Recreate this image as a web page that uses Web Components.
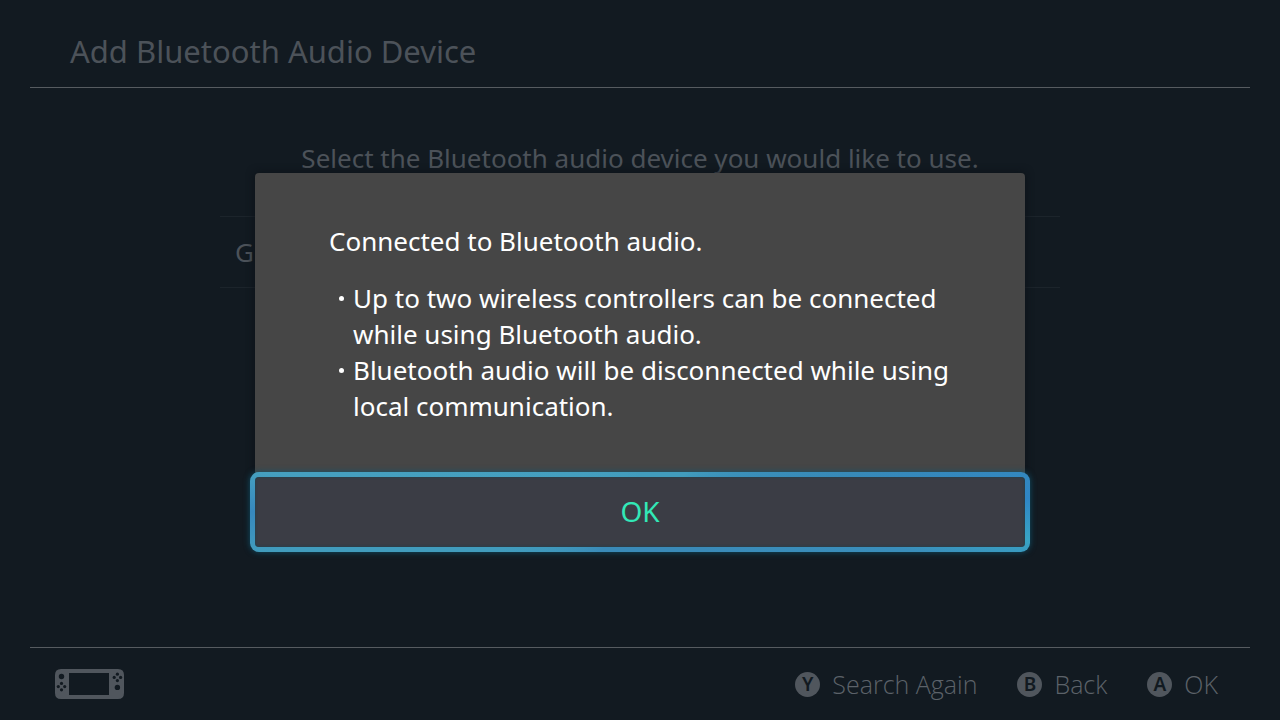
<!DOCTYPE html>
<html lang="en">
<head>
<meta charset="utf-8">
<title>Add Bluetooth Audio Device</title>
<style>
  body {
    margin: 0;
    background: #121a21;
    color: #4c5259;
    font-family: "Noto Sans", "Open Sans", sans-serif;
  }
</style>
</head>
<body>
<settings-screen>
  <screen-header slot="header">Add Bluetooth Audio Device</screen-header>
  <device-list>
    <span slot="prompt">Select the Bluetooth audio device you would like to use.</span>
    <device-row>G</device-row>
  </device-list>
  <screen-footer slot="footer">
    <button-hint key="Y">Search Again</button-hint>
    <button-hint key="B">Back</button-hint>
    <button-hint key="A">OK</button-hint>
  </screen-footer>
  <message-dialog slot="dialog" action="OK">
    <span slot="title">Connected to Bluetooth audio.</span>
    <dialog-note>Up to two wireless controllers can be connected while using Bluetooth audio.</dialog-note>
    <dialog-note>Bluetooth audio will be disconnected while using local communication.</dialog-note>
  </message-dialog>
</settings-screen>
<script>
const define = (name, html, setup) => {
  const template = document.createElement('template');
  template.innerHTML = html;
  customElements.define(name, class extends HTMLElement {
    constructor() {
      super();
      this.attachShadow({ mode: 'open' }).append(template.content.cloneNode(true));
    }
    connectedCallback() {
      if (setup) setup(this, this.shadowRoot);
    }
  });
};

define('settings-screen', `
  <style>
    :host { display: flex; flex-direction: column; min-height: 100vh; position: relative; }
    main { flex: 1; }
  </style>
  <slot name="header"></slot>
  <main><slot></slot></main>
  <slot name="footer"></slot>
  <slot name="dialog"></slot>
`);

define('screen-header', `
  <style>
    :host { display: block; margin: 0 30px; padding: 30px 40px 15px; border-bottom: 1px solid #565b60; }
    h1 { margin: 0; font-size: 31px; line-height: 42px; font-weight: inherit; }
  </style>
  <h1><slot></slot></h1>
`);

define('device-list', `
  <style>
    :host { display: block; max-width: 840px; margin: 0 auto; padding-top: 52px; }
    p { margin: 0 0 40px; font-size: 26px; line-height: 36px; text-align: center; }
    div { border-top: 1px solid #1c242b; }
  </style>
  <p><slot name="prompt"></slot></p>
  <div><slot></slot></div>
`);

define('device-row', `
  <style>
    :host { display: block; padding: 17px 15px; font-size: 26px; line-height: 36px; border-bottom: 1px solid #1c242b; }
  </style>
  <slot></slot>
`);

define('screen-footer', `
  <style>
    :host { display: flex; align-items: center; justify-content: space-between; margin: 0 30px; padding: 0 32px 0 25px; height: 72px; border-top: 1px solid #565b60; }
    svg { display: block; }
    nav { display: flex; gap: 40px; }
  </style>
  <svg width="69" height="30" viewBox="0 0 69 30" aria-hidden="true">
    <path fill="#50565d" fill-rule="evenodd" d="M6 0H63Q69 0 69 6V24Q69 30 63 30H6Q0 30 0 24V6Q0 0 6 0ZM14 4V26H54V4Z"/>
    <g fill="#121a21">
      <circle cx="6.500" cy="7.500" r="2.700"/>
      <circle cx="62.400" cy="18.400" r="2.700"/>
      <circle cx="6.500" cy="14.400" r="1.600"/><circle cx="6.500" cy="20.800" r="1.600"/>
      <circle cx="3.300" cy="17.600" r="1.600"/><circle cx="9.700" cy="17.600" r="1.600"/>
      <circle cx="62.400" cy="5.200" r="1.600"/><circle cx="62.400" cy="11.600" r="1.600"/>
      <circle cx="59.200" cy="8.400" r="1.600"/><circle cx="65.600" cy="8.400" r="1.600"/>
    </g>
  </svg>
  <nav><slot></slot></nav>
`);

define('button-hint', `
  <style>
    :host { display: block; }
    button { display: flex; align-items: center; gap: 12px; margin: 0; padding: 0; border: 0; background: none; color: #5c6269; font: 300 25px/36px "Open Sans", sans-serif; }
    b { width: 25px; height: 25px; border-radius: 50%; background: #50565d; color: #121a21; font: 600 19px/25px "Noto Sans", sans-serif; text-align: center; }
  </style>
  <button type="button"><b></b><span><slot></slot></span></button>
`, (host, root) => { root.querySelector('b').textContent = host.getAttribute('key'); });

define('message-dialog', `
  <style>
    :host { position: absolute; inset: 0; display: grid; place-items: center; }
    section { box-sizing: border-box; width: 770px; max-width: calc(100% - 40px); background: #464646; border-radius: 4px; color: #fff; box-shadow: 0 0 8px #0b1117; }
    .message { padding: 50px 60px 53px 74px; font-size: 26px; line-height: 36px; }
    h2 { margin: 0 0 21px; font-size: 26px; line-height: 36px; font-weight: inherit; }
    ul { margin: 0; padding: 0 0 0 24px; list-style: none; }
    button {
      display: block; box-sizing: border-box; width: calc(100% + 10px); height: 80px; margin: -5px; padding: 0 0 2px;
      border: 5px solid transparent; border-radius: 9px;
      background:
        linear-gradient(#3b3d45, #3b3d45) padding-box,
        conic-gradient(#419cbd 0deg, #419cbd 50deg, #378ab8 80deg, #2f86c5 88deg, #38a4c4 94deg, #3a8ebb 98deg, #3a8ab8 120deg, #3a8ab8 225deg, #419cbd 255deg, #419cbd 264deg, #3788bd 270deg, #45a0c0 276deg, #419cbd 360deg) border-box;
      box-shadow: 0 0 6px #12526a, inset 0 0 3px #17414f;
      color: #32e8b7; font: inherit; font-size: 28px; line-height: 36px;
    }
    button:focus { outline: 0; }
  </style>
  <section role="dialog" aria-labelledby="title">
    <div class="message">
      <h2 id="title"><slot name="title"></slot></h2>
      <ul role="list"><slot></slot></ul>
    </div>
    <button type="button"></button>
  </section>
`, (host, root) => { root.querySelector('button').textContent = host.getAttribute('action'); });

define('dialog-note', `
  <style>
    :host { display: block; position: relative; }
    :host::before { content: ""; position: absolute; left: -14px; top: 16px; width: 5px; height: 5px; border-radius: 50%; background: #fff; }
  </style>
  <slot></slot>
`, host => host.setAttribute('role', 'listitem'));
</script>
</body>
</html>
